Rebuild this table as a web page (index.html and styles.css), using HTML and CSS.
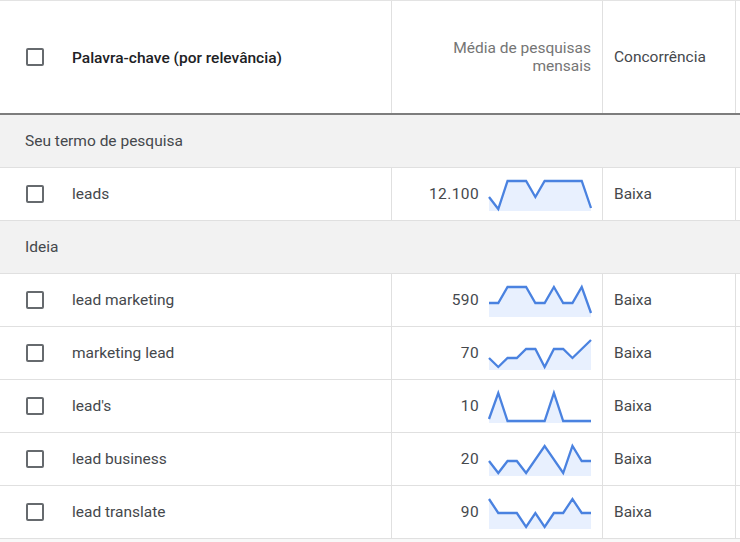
FILE: index.html
```html
<!DOCTYPE html>
<html lang="pt">
<head>
<meta charset="utf-8">
<title>Palavras-chave</title>
<link rel="stylesheet" href="styles.css">
</head>
<body>
<div class="table">
  <div class="row head">
    <div class="cell kw"><span class="cb"></span><span class="hkw">Palavra-chave (por relevância)</span></div>
    <div class="cell vol"><span class="hvol">Média de pesquisas<br>mensais</span></div>
    <div class="cell comp hcomp">Concorrência</div>
    <div class="cell rest"></div>
  </div>

  <div class="group">Seu termo de pesquisa</div>

  <div class="row">
    <div class="cell kw"><span class="cb"></span><span class="term">leads</span></div>
    <div class="cell vol"><span class="num">12.100</span>
      <svg class="spark" viewBox="0 0 102 30" width="102" height="30"><polygon class="area" points="0,16 9.27,28 18.55,0 27.82,0 37.09,0 46.36,16 55.64,0 64.91,0 74.18,0 83.45,0 92.73,0 102,27 102,30 0,30"/><polyline class="line" points="0,16 9.27,28 18.55,0 27.82,0 37.09,0 46.36,16 55.64,0 64.91,0 74.18,0 83.45,0 92.73,0 102,27"/></svg>
    </div>
    <div class="cell comp">Baixa</div>
    <div class="cell rest"></div>
  </div>

  <div class="group">Ideia</div>

  <div class="row">
    <div class="cell kw"><span class="cb"></span><span class="term">lead marketing</span></div>
    <div class="cell vol"><span class="num">590</span>
      <svg class="spark" viewBox="0 0 102 30" width="102" height="30"><polygon class="area" points="0,16 9.27,16 18.55,0 27.82,0 37.09,0 46.36,16 55.64,16 64.91,0 74.18,16 83.45,16 92.73,0 102,26 102,30 0,30"/><polyline class="line" points="0,16 9.27,16 18.55,0 27.82,0 37.09,0 46.36,16 55.64,16 64.91,0 74.18,16 83.45,16 92.73,0 102,26"/></svg>
    </div>
    <div class="cell comp">Baixa</div>
    <div class="cell rest"></div>
  </div>

  <div class="row">
    <div class="cell kw"><span class="cb"></span><span class="term">marketing lead</span></div>
    <div class="cell vol"><span class="num">70</span>
      <svg class="spark" viewBox="0 0 102 30" width="102" height="30"><polygon class="area" points="0,18 9.27,27 18.55,18 27.82,18 37.09,9 46.36,9 55.64,27 64.91,9 74.18,9 83.45,18 92.73,9 102,0 102,30 0,30"/><polyline class="line" points="0,18 9.27,27 18.55,18 27.82,18 37.09,9 46.36,9 55.64,27 64.91,9 74.18,9 83.45,18 92.73,9 102,0"/></svg>
    </div>
    <div class="cell comp">Baixa</div>
    <div class="cell rest"></div>
  </div>

  <div class="row">
    <div class="cell kw"><span class="cb"></span><span class="term">lead's</span></div>
    <div class="cell vol"><span class="num">10</span>
      <svg class="spark" viewBox="0 0 102 30" width="102" height="30"><polygon class="area" points="0,26 9.27,0 18.55,28 27.82,28 37.09,28 46.36,28 55.64,28 64.91,0 74.18,28 83.45,28 92.73,28 102,28 102,30 0,30"/><polyline class="line" points="0,26 9.27,0 18.55,28 27.82,28 37.09,28 46.36,28 55.64,28 64.91,0 74.18,28 83.45,28 92.73,28 102,28"/></svg>
    </div>
    <div class="cell comp">Baixa</div>
    <div class="cell rest"></div>
  </div>

  <div class="row">
    <div class="cell kw"><span class="cb"></span><span class="term">lead business</span></div>
    <div class="cell vol"><span class="num">20</span>
      <svg class="spark" viewBox="0 0 102 30" width="102" height="30"><polygon class="area" points="0,15 9.27,27 18.55,15 27.82,15 37.09,27 55.64,0 74.18,27 83.45,0 92.73,15 102,15 102,30 0,30"/><polyline class="line" points="0,15 9.27,27 18.55,15 27.82,15 37.09,27 55.64,0 74.18,27 83.45,0 92.73,15 102,15"/></svg>
    </div>
    <div class="cell comp">Baixa</div>
    <div class="cell rest"></div>
  </div>

  <div class="row">
    <div class="cell kw"><span class="cb"></span><span class="term">lead translate</span></div>
    <div class="cell vol"><span class="num">90</span>
      <svg class="spark" viewBox="0 0 102 30" width="102" height="30"><polygon class="area" points="0,0 9.27,14 18.55,14 27.82,14 37.09,28 46.36,14 55.64,28 64.91,14 74.18,14 83.45,0 92.73,14 102,14 102,30 0,30"/><polyline class="line" points="0,0 9.27,14 18.55,14 27.82,14 37.09,28 46.36,14 55.64,28 64.91,14 74.18,14 83.45,0 92.73,14 102,14"/></svg>
    </div>
    <div class="cell comp">Baixa</div>
    <div class="cell rest"></div>
  </div>
</div>
</body>
</html>
```

FILE: styles.css
```css
* { box-sizing: border-box; }

html, body {
  margin: 0;
  padding: 0;
}

body {
  background: #f8f8f8;
  font-family: Roboto, "Liberation Sans", Arial, sans-serif;
  font-size: 15.5px;
  color: #3c4043;
  width: 740px;
  height: 542px;
  overflow: hidden;
}

.table {
  background: #fff;
  border-top: 1px solid #e3e3e3;
}

.row {
  display: grid;
  grid-template-columns: 392px 211px 133px 1fr;
  height: 53px;
  border-bottom: 1px solid #e0e0e0;
}

.row.head {
  height: 114px;
  border-bottom: 2px solid #7d7d7d;
}

.cell {
  display: flex;
  align-items: center;
  border-right: 1px solid #e0e0e0;
  min-width: 0;
}

.cell.rest {
  border-right: none;
}

.kw {
  padding-left: 26px;
  gap: 28px;
}

.cb {
  flex: none;
  width: 18px;
  height: 18px;
  border: 2px solid #666a6e;
  border-radius: 2px;
}

.hkw {
  font-weight: 500;
  color: #202124;
  padding-top: 1px;
}

.term {
  color: #45484c;
}

.vol {
  justify-content: flex-end;
  padding-right: 11px;
  gap: 10px;
}

.hvol {
  text-align: right;
  color: #757575;
  line-height: 18px;
}

.hcomp {
  color: #757575;
}

.comp {
  padding-left: 11px;
  color: #45484c;
}

.num {
  color: #45484c;
  letter-spacing: 0.4px;
}

.spark {
  display: block;
  flex: none;
  margin-top: 4px;
  overflow: visible;
}

.spark .area {
  fill: #e8f0fe;
  stroke: none;
}

.spark .line {
  fill: none;
  stroke: #4a82e0;
  stroke-width: 2.3;
}

.group {
  height: 53px;
  display: flex;
  align-items: center;
  padding-left: 25px;
  background: #f2f2f2;
  border-bottom: 1px solid #e0e0e0;
  color: #45484c;
}
```
